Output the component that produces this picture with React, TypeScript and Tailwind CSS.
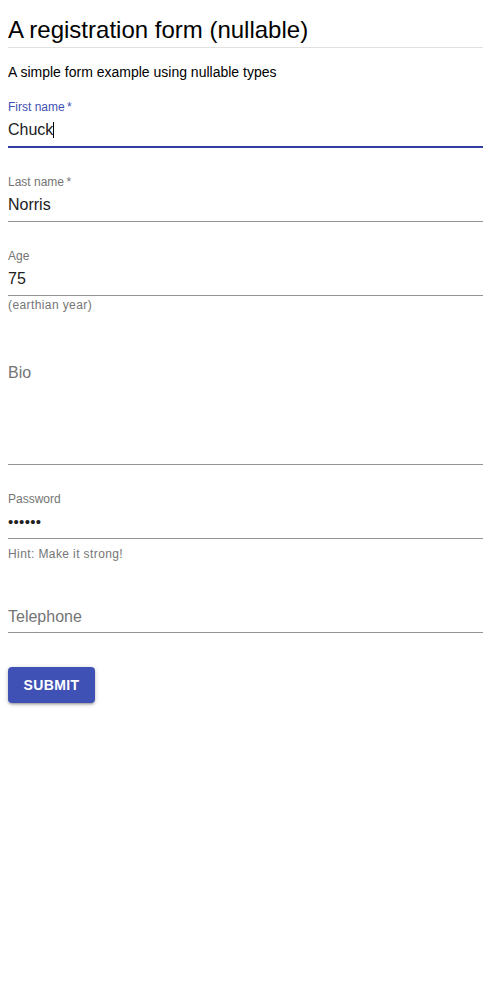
import React from "react";

type FieldProps = {
  label: string;
  value?: string;
  required?: boolean;
  focused?: boolean;
  helper?: string;
  helperClass?: string;
  className?: string;
  password?: boolean;
};

function Field({ label, value, required, focused, helper, helperClass, className, password }: FieldProps) {
  const shrink = value !== undefined;
  return (
    <div className={className}>
      <div className="relative">
        {shrink ? (
          <div className={`h-4 text-[12px] leading-[19px] ${focused ? "text-[#3f51b5]" : "text-[#757575]"}`}>
            {label}
            {required ? "\u2009*" : ""}
          </div>
        ) : (
          <div className="h-4" />
        )}
        <div
          className={`pt-[6px] pb-[7px] text-[16px] leading-[19px] text-[#212121] ${
            focused ? "border-b-2 border-[#303f9f]" : "border-b border-[#949494]"
          }`}
        >
          {shrink ? (
            password ? (
              <span className="text-[15px] tracking-[0.3px]">{value}</span>
            ) : (
              <span>
                {value}
                {focused ? <span className="inline-block w-px h-[16px] bg-black align-[-3px]" /> : null}
              </span>
            )
          ) : (
            <span className="invisible">&nbsp;</span>
          )}
        </div>
        {!shrink ? (
          <div className="absolute left-0 top-[25px] text-[16px] leading-[16px] text-[#757575]">{label}</div>
        ) : null}
      </div>
      {helper ? (
        <div className={`text-[12px] leading-[14px] tracking-[0.4px] text-[#757575] ${helperClass ?? ""}`}>{helper}</div>
      ) : null}
    </div>
  );
}

export default function App() {
  return (
    <div className="min-h-screen bg-white p-2 font-['Liberation_Sans',Arial,sans-serif]">
      <h1 className="mt-2 text-[24px] leading-[28px] text-black">A registration form (nullable)</h1>
      <div className="mt-[3px] h-px bg-[#e0e0e0]" />
      <p className="mt-[14px] text-[14px] leading-[20px] text-black">A simple form example using nullable types</p>
      <form className="mt-4 flex flex-col" onSubmit={(e) => e.preventDefault()}>
        <Field label="First name" value="Chuck" required focused />
        <Field className="mt-[25px]" label="Last name" value="Norris" required />
        <Field className="mt-[25px]" label="Age" value="75" helper="(earthian year)" helperClass="mt-[2px]" />
        <div className="mt-[28px] relative">
          <div className="h-4" />
          <div className="h-[109px] border-b border-[#949494]" />
          <div className="absolute left-0 top-[25px] text-[16px] leading-[16px] text-[#757575]">Bio</div>
        </div>
        <Field
          className="mt-[25px]"
          label="Password"
          value={"\u2022\u2022\u2022\u2022\u2022\u2022"}
          password
          helper="Hint: Make it strong!"
          helperClass="mt-[8px]"
        />
        <Field className="mt-[23px]" label="Telephone" />
        <div className="mt-[34px]">
          <button
            type="submit"
            className="h-9 w-[87px] rounded-[4px] bg-[#3f51b5] text-[14px] font-semibold uppercase tracking-[0.4px] text-white shadow-[0_1px_5px_0_rgba(0,0,0,0.2),0_2px_2px_0_rgba(0,0,0,0.14),0_3px_1px_-2px_rgba(0,0,0,0.12)]"
          >
            Submit
          </button>
        </div>
      </form>
    </div>
  );
}
